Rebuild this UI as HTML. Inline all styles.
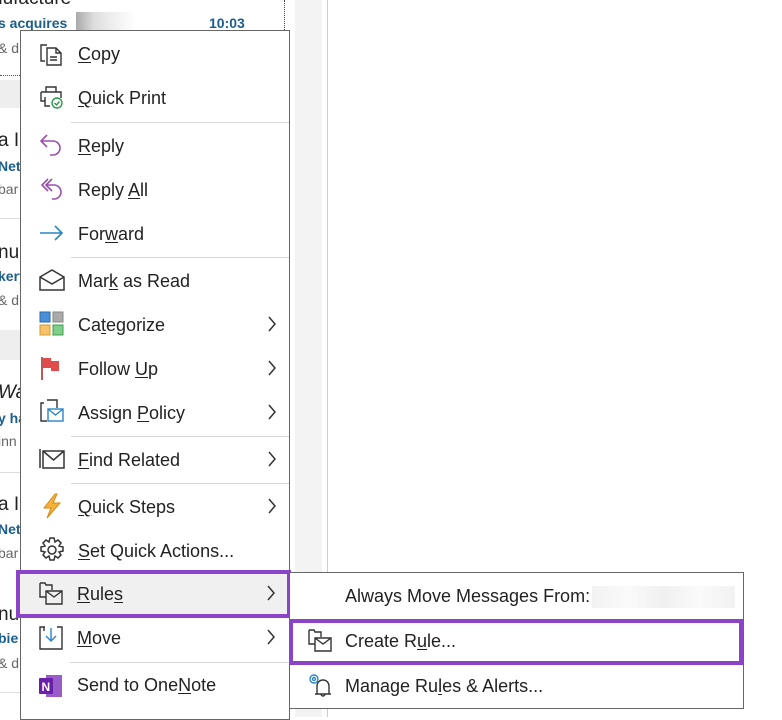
<!DOCTYPE html>
<html><head><meta charset="utf-8"><style>
*{margin:0;padding:0;box-sizing:border-box}
body{width:782px;height:717px;overflow:hidden;background:#fff;position:relative;font-family:"Liberation Sans",sans-serif;color:#222}
.a{position:absolute;white-space:nowrap}
.bg{font-size:19px;color:#222}
.bl{font-size:14px;font-weight:bold;color:#1b5e8c}
.gr{font-size:14px;color:#666}
.menu{position:absolute;left:20px;top:30px;width:270px;height:690px;background:#fff;border:1px solid #666}
.it{position:absolute;left:57px;font-size:18px;color:#222;white-space:nowrap}
.ic{position:absolute;left:18px}
.sep{position:absolute;left:50px;right:0;height:1px;background:#d8d8d8}
.ch{position:absolute;left:246px}
u{text-decoration:underline;text-underline-offset:2px}
</style></head><body>
<div class="a bg" style="left:-8px;top:-12px">nufacture</div>
<div class="a bl" style="left:-2px;top:15px">s acquires</div>
<div class="a" style="left:76px;top:12px;width:60px;height:18px;background:linear-gradient(90deg,#aaa,#ddd 30%,#eee 60%,#fff)"></div>
<div class="a bl" style="left:209px;top:15px">10:03</div>
<div class="a gr" style="left:-2px;top:40px">&amp; d</div>
<div class="a" style="left:0;top:75px;width:20px;border-top:1px dotted #555"></div>
<div class="a" style="left:0;top:80px;width:20px;height:28px;background:#eee"></div>
<div class="a bg" style="left:-2px;top:130px">a I</div>
<div class="a bl" style="left:-2px;top:158px">Net</div>
<div class="a gr" style="left:-2px;top:181px">bar</div>
<div class="a" style="left:0;top:218px;width:20px;height:1px;background:#ddd"></div>
<div class="a bg" style="left:-2px;top:242px">nu</div>
<div class="a bl" style="left:-2px;top:268px">kery</div>
<div class="a gr" style="left:-2px;top:292px">&amp; d</div>
<div class="a" style="left:0;top:330px;width:20px;height:30px;background:#eee"></div>
<div class="a bg" style="left:-2px;top:382px;font-style:italic">Wa</div>
<div class="a bl" style="left:-2px;top:410px">y ha</div>
<div class="a gr" style="left:-2px;top:433px">inn</div>
<div class="a" style="left:0;top:472px;width:20px;height:1px;background:#ddd"></div>
<div class="a bg" style="left:-2px;top:494px">a I</div>
<div class="a bl" style="left:-2px;top:521px">Net</div>
<div class="a gr" style="left:-2px;top:545px">bar</div>
<div class="a bg" style="left:-2px;top:604px">nu</div>
<div class="a bl" style="left:-2px;top:630px">bie</div>
<div class="a gr" style="left:-2px;top:655px">&amp; d</div>
<div class="a" style="left:0;top:692px;width:20px;height:1px;background:#ddd"></div>
<div class="a" style="left:284px;top:0;height:30px;border-left:1px dotted #444"></div>
<div class="a" style="left:295px;top:0;width:27px;height:717px;background:#f3f3f3"></div>
<div class="a" style="left:327px;top:0;width:1px;height:717px;background:#ccc"></div>

<div class="menu">
<svg class="ic" style="top:10px" width="26" height="26" viewBox="0 0 26 26" fill="none" stroke="#333" stroke-width="1.4"><path d="M8 4H2v16h4M8 7h9l5 5v12H8z M17 7v5h5 M11 16h7 M11 19h7"/></svg>
<div class="it" style="top:13px"><u>C</u>opy</div>
<svg class="ic" style="top:53px" width="26" height="26" viewBox="0 0 26 26" fill="none" stroke="#333" stroke-width="1.4"><path d="M7 8V3h10v5M2 8h20v6M2 8v9h4M6 13v9h5"/><circle cx="18" cy="19" r="5" stroke="#2e9a4a"/><path d="M15.5 19l2 2 3-3.5" stroke="#2e9a4a"/></svg>
<div class="it" style="top:57px"><u>Q</u>uick Print</div>
<div class="sep" style="top:91px"></div>
<svg class="ic" style="top:101px" width="26" height="26" viewBox="0 0 26 26" fill="none" stroke="#9b4fb0" stroke-width="1.6"><path d="M8 3L2 9l6 6M2 9h12a7 7 0 0 1 0 14h-3"/></svg>
<div class="it" style="top:105px"><u>R</u>eply</div>
<svg class="ic" style="top:145px" width="26" height="26" viewBox="0 0 26 26" fill="none" stroke="#9b4fb0" stroke-width="1.6"><path d="M9 3L3 9l6 6M13 3L7 9l6 6M7 9h8a7 7 0 0 1 0 14h-2"/></svg>
<div class="it" style="top:149px">Reply <u>A</u>ll</div>
<svg class="ic" style="top:189px" width="26" height="26" viewBox="0 0 26 26" fill="none" stroke="#2b86c5" stroke-width="1.6"><path d="M1 13h22M16 6l7 7-7 7"/></svg>
<div class="it" style="top:193px">For<u>w</u>ard</div>
<div class="sep" style="top:226px"></div>
<svg class="ic" style="top:236px" width="26" height="26" viewBox="0 0 26 26" fill="none" stroke="#333" stroke-width="1.5"><path d="M1 10l12-7 12 7v13H1z M1 10l12 7 12-7"/></svg>
<div class="it" style="top:240px">Mar<u>k</u> as Read</div>
<svg class="ic" style="top:280px" width="26" height="26" viewBox="0 0 26 26"><rect x="1" y="1" width="10" height="10" fill="#4a90d9" stroke="#2a6aa9"/><rect x="14" y="1" width="10" height="10" fill="#aaa" stroke="#888"/><rect x="1" y="14" width="10" height="10" fill="#f5c26b" stroke="#d49a30"/><rect x="14" y="14" width="10" height="10" fill="#7fcf8a" stroke="#3f9f4a"/></svg>
<div class="it" style="top:284px">Ca<u>t</u>egorize</div>
<svg class="ch" style="top:285px" width="10" height="16" viewBox="0 0 10 16" fill="none" stroke="#333" stroke-width="1.5"><path d="M2 1l6 7-6 7"/></svg>
<svg class="ic" style="top:324px" width="26" height="26" viewBox="0 0 26 26"><path d="M3 2v23" stroke="#b02b2b" stroke-width="1.6"/><path d="M4 3h8v3h8v10h-8v-3H4z" fill="#e04b4b"/></svg>
<div class="it" style="top:328px">Follow <u>U</u>p</div>
<svg class="ch" style="top:329px" width="10" height="16" viewBox="0 0 10 16" fill="none" stroke="#333" stroke-width="1.5"><path d="M2 1l6 7-6 7"/></svg>
<svg class="ic" style="top:367px" width="26" height="26" viewBox="0 0 26 26" fill="none" stroke="#333" stroke-width="1.4"><path d="M5 5H2v18h6M8 2h10v8"/><rect x="9" y="11" width="15" height="12" stroke="#2b86c5"/><path d="M9 11l7.5 6 7.5-6" stroke="#2b86c5"/></svg>
<div class="it" style="top:372px">Assign <u>P</u>olicy</div>
<svg class="ch" style="top:373px" width="10" height="16" viewBox="0 0 10 16" fill="none" stroke="#333" stroke-width="1.5"><path d="M2 1l6 7-6 7"/></svg>
<div class="sep" style="top:405px"></div>
<svg class="ic" style="top:415px" width="26" height="26" viewBox="0 0 26 26" fill="none" stroke="#333" stroke-width="1.5"><path d="M1 3v19M4 5h21v17H4z M4 5l10.5 9L25 5"/></svg>
<div class="it" style="top:419px"><u>F</u>ind Related</div>
<svg class="ch" style="top:420px" width="10" height="16" viewBox="0 0 10 16" fill="none" stroke="#333" stroke-width="1.5"><path d="M2 1l6 7-6 7"/></svg>
<div class="sep" style="top:452px"></div>
<svg class="ic" style="top:462px" width="26" height="26" viewBox="0 0 26 26"><path d="M16 1L5 15h7l-4 10 13-15h-7l4-9z" fill="#f5b13d" stroke="#d48a10" stroke-width="1"/></svg>
<div class="it" style="top:466px"><u>Q</u>uick Steps</div>
<svg class="ch" style="top:467px" width="10" height="16" viewBox="0 0 10 16" fill="none" stroke="#333" stroke-width="1.5"><path d="M2 1l6 7-6 7"/></svg>
<svg class="ic" style="top:506px" width="26" height="26" viewBox="0 0 26 26" fill="none" stroke="#333" stroke-width="1.5"><path d="M11 1h4l1 4 3-2 3 3-2 3 4 1v4l-4 1 2 3-3 3-3-2-1 4h-4l-1-4-3 2-3-3 2-3-4-1v-4l4-1-2-3 3-3 3 2z"/><circle cx="13" cy="13" r="4"/></svg>
<div class="it" style="top:510px"><u>S</u>et Quick Actions...</div>
</div>

<div class="a" style="left:16px;top:570px;width:275px;height:48px;background:#f0f0f0;border:4px solid #8b44c8"></div>
<svg class="a" style="left:38px;top:581px" width="26" height="26" viewBox="0 0 26 26" fill="none" stroke="#333" stroke-width="1.4"><path d="M2 2h5l1 2h6v5M2 2v14h6M8 10h16v13H8z M8 10l8 6 8-6"/></svg>
<div class="a it" style="left:77px;top:584px"><u>R</u>ule<u>s</u></div>
<svg class="a" style="left:266px;top:585px" width="10" height="16" viewBox="0 0 10 16" fill="none" stroke="#333" stroke-width="1.5"><path d="M2 1l6 7-6 7"/></svg>

<svg class="a" style="left:38px;top:625px" width="26" height="26" viewBox="0 0 26 26" fill="none" stroke="#333" stroke-width="1.4"><path d="M7 2H2v22h22V2h-5M6 2v4"/><path d="M13 3v12M8 11l5 5 5-5" stroke="#2b86c5"/></svg>
<div class="a it" style="left:77px;top:628px"><u>M</u>ove</div>
<svg class="a" style="left:266px;top:629px" width="10" height="16" viewBox="0 0 10 16" fill="none" stroke="#333" stroke-width="1.5"><path d="M2 1l6 7-6 7"/></svg>
<div class="a" style="left:70px;top:662px;width:219px;height:1px;background:#d8d8d8"></div>
<svg class="a" style="left:38px;top:673px" width="26" height="26" viewBox="0 0 26 26"><rect x="8" y="2" width="16" height="22" fill="#9a5cc9"/><rect x="1" y="5" width="14" height="16" rx="1" fill="#6a1fa8"/><text x="3.5" y="18" font-size="12" font-weight="bold" fill="#fff" font-family="Liberation Sans">N</text></svg>
<div class="a it" style="left:77px;top:675px">Send to One<u>N</u>ote</div>

<div class="a" style="left:289px;top:572px;width:455px;height:137px;background:#fff;border:1px solid #666"></div>
<div class="a it" style="left:345px;top:586px">Always Move Messages From:</div>
<div class="a" style="left:592px;top:586px;width:143px;height:22px;background:linear-gradient(90deg,#f2f2f2,#fafafa,#f0f0f0,#fafafa,#f2f2f2)"></div>
<div class="a" style="left:289px;top:619px;width:454px;height:46px;border:4px solid #8b44c8;background:#fff"></div>
<svg class="a" style="left:307px;top:628px" width="26" height="26" viewBox="0 0 26 26" fill="none" stroke="#333" stroke-width="1.4"><path d="M2 2h5l1 2h6v5M2 2v14h6M8 10h16v13H8z M8 10l8 6 8-6"/></svg>
<div class="a it" style="left:345px;top:631px">Create R<u>u</u>le...</div>
<svg class="a" style="left:307px;top:672px" width="26" height="26" viewBox="0 0 26 26" fill="none" stroke-width="1.4"><circle cx="7" cy="7" r="4" stroke="#2b86c5"/><circle cx="7" cy="7" r="1.5" stroke="#2b86c5"/><path d="M10 22V14a6 6 0 0 1 12 0v8h2H8h2M14 22a2 2 0 0 0 4 0" stroke="#333"/></svg>
<div class="a it" style="left:345px;top:676px">Manage Ru<u>l</u>es &amp; Alerts...</div>
</body></html>
